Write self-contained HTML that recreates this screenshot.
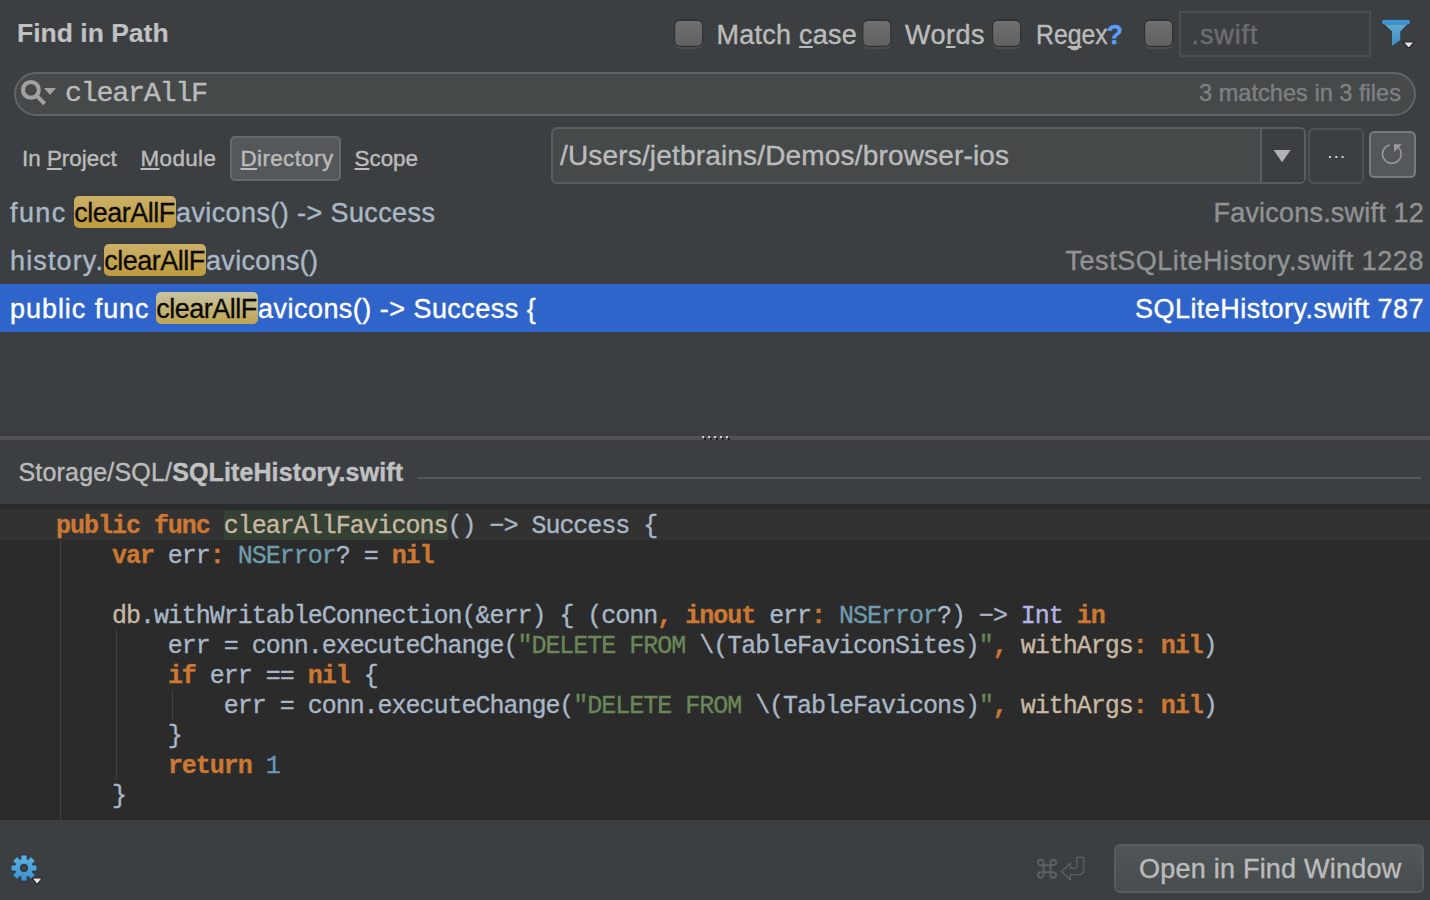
<!DOCTYPE html>
<html>
<head>
<meta charset="utf-8">
<title>Find in Path</title>
<style>
*{box-sizing:border-box;margin:0;padding:0}
html,body{width:1430px;height:900px;overflow:hidden;background:#3c3f41}
body{position:relative;font-family:"Liberation Sans",sans-serif;color:#bbbbbb}
.abs{position:absolute}
.t{position:absolute;white-space:pre;line-height:1;-webkit-text-stroke:0.4px}
u{text-decoration:underline;text-decoration-thickness:2px;text-underline-offset:2px;text-decoration-skip-ink:none}
.cb{position:absolute;width:29.5px;height:28px;border-radius:6px;background:linear-gradient(#6f6f6f,#626262);border:2px solid #2d2f31;box-shadow:0 2px 0 #4a4d4f}
.mono{font-family:"Liberation Mono",monospace}
svg{position:absolute;overflow:visible}
/* results */
.rt{position:absolute;white-space:pre;line-height:1;font-size:27px;color:#a9b7c6;-webkit-text-stroke:0.4px}
.rf{position:absolute;white-space:pre;line-height:1;font-size:27px;color:#909294;right:6px;text-align:right;-webkit-text-stroke:0.4px}
.hl{position:absolute;width:102px;height:32px;border-radius:5px;background:linear-gradient(#ccb068,#bf9b3e)}
.hlt{position:absolute;white-space:pre;line-height:1;font-size:27px;color:#0a0a0a;letter-spacing:-0.5px;-webkit-text-stroke:0.3px}
/* code */
#code{position:absolute;left:0;top:504px;width:1430px;height:316px;background:#2b2b2b;overflow:hidden}
.cl{position:absolute;left:56px;height:30px;line-height:30px;font-family:"Liberation Mono",monospace;font-size:25px;letter-spacing:-1.02px;color:#a9b7c6;white-space:pre;-webkit-text-stroke:0.35px}
.k{color:#cc7832;font-weight:bold}
.p{color:#cc7832}
.ty{color:#6f9cad}
.s{color:#6a8759}
.n{color:#6897bb}
.it{color:#b5b6e3}
.fn{color:#c8b8a2}
.g{position:absolute;width:1px;background:#424242}
</style>
</head>
<body>

<!-- title -->
<div class="t" style="left:17px;top:20px;font-size:26.5px;font-weight:bold;color:#c0c1c2;-webkit-text-stroke:0.15px">Find in Path</div>

<!-- checkboxes -->
<svg style="left:0;top:0" width="1430" height="60" viewBox="0 0 1430 60">
<defs><linearGradient id="cg" x1="0" y1="0" x2="0" y2="1"><stop offset="0" stop-color="#707070"/><stop offset="1" stop-color="#616161"/></linearGradient>
<g id="cb"><rect x="0.2" y="2.6" width="28.9" height="27.2" rx="6" fill="#4a4d4f"/><rect x="0" y="0" width="29.3" height="27.8" rx="6" fill="#313335"/><rect x="1.35" y="1.7" width="26.7" height="24.7" rx="4.6" fill="url(#cg)"/></g></defs>
<use href="#cb" x="673.9" y="19.3"/><use href="#cb" x="862.1" y="19.3"/><use href="#cb" x="991.9" y="19.3"/><use href="#cb" x="1143.9" y="19.3"/>
</svg>
<div class="t" style="left:716.5px;top:22px;font-size:27px;letter-spacing:0.25px">Match <u>c</u>ase</div>
<div class="t" style="left:905px;top:22px;font-size:27px;letter-spacing:0.5px">Wo<u>r</u>ds</div>
<div class="t" style="left:1035.5px;top:22px;font-size:27px;transform:scaleX(0.918);transform-origin:0 0">Re<u>g</u>ex</div>
<div class="t" style="left:1106.5px;top:22px;font-size:27px;font-weight:bold;color:#589df6">?</div>

<!-- file mask -->
<div class="abs" style="left:1179px;top:11px;width:192px;height:46px;border:2px solid #4b4e50;background:#3c3f41"></div>
<div class="t" style="left:1191.5px;top:22px;font-size:27px;color:#6b6e70;letter-spacing:0.9px">.swift</div>

<!-- filter icon -->
<svg style="left:1376px;top:14px" width="44" height="40" viewBox="1376 14 44 40">
<defs><linearGradient id="fg" gradientUnits="userSpaceOnUse" x1="0" y1="24" x2="0" y2="46"><stop offset="0" stop-color="#62acd2"/><stop offset="1" stop-color="#3a8cc6"/></linearGradient></defs>
<g stroke="#2f3133" stroke-width="1.1" fill="#2f3133" stroke-linejoin="round"><path d="M1383.6 23.5 L1408.3 23.5 L1400.3 31.6 L1400.3 40.3 L1391.9 46.2 L1391.9 31.6 Z"/><rect x="1381.9" y="19.7" width="28.2" height="4.6" rx="2.3"/></g>
<path d="M1383.6 23.5 L1408.3 23.5 L1400.3 31.6 L1400.3 40.3 L1391.9 46.2 L1391.9 31.6 Z" fill="url(#fg)"/>
<rect x="1381.9" y="19.7" width="28.2" height="4.6" rx="2.3" fill="#4194d0"/>
<path d="M1384.5 24.45 H1407.5" stroke="#2f7fb9" stroke-width="0.6"/>
<path d="M1403 42 L1414.4 42 L1408.7 48.4 Z" fill="#e4e4e4" stroke="#242628" stroke-width="1.2" stroke-linejoin="round"/>
</svg>

<!-- search field -->
<div class="abs" style="left:14px;top:72px;width:1402px;height:44px;border-radius:22px;border:2px solid #626567;background:#45494a"></div>
<svg style="left:16px;top:74px" width="50" height="40" viewBox="16 74 50 40">
<circle cx="30.9" cy="89.9" r="7.95" fill="none" stroke="#a1a2a3" stroke-width="4"/>
<path d="M36.3 95.4 L44.7 103.7" stroke="#a1a2a3" stroke-width="4.1" fill="none"/>
<path d="M44 88 L56.1 88 L50.05 95 Z" fill="#a1a2a3"/>
</svg>
<div class="t mono" style="left:65px;top:80px;font-size:28.5px;letter-spacing:-1.35px;color:#bbbbbb;-webkit-text-stroke:0.35px">clearAllF</div>
<div class="t" style="left:1199px;top:82px;font-size:23.6px;color:#7d8082">3 matches in 3 files</div>

<!-- scope tabs -->
<div class="t" style="left:22px;top:148px;font-size:22.4px">In <u>P</u>roject</div>
<div class="t" style="left:140.5px;top:148px;font-size:22.4px;letter-spacing:0.39px"><u>M</u>odule</div>
<div class="abs" style="left:230px;top:135.5px;width:111px;height:45.5px;border-radius:5px;border:2px solid #676a6c;background:#54585a"></div>
<div class="t" style="left:240.5px;top:148px;font-size:22.4px;letter-spacing:0.38px"><u>D</u>irectory</div>
<div class="t" style="left:354.5px;top:148px;font-size:22.4px"><u>S</u>cope</div>

<!-- directory combo -->
<div class="abs" style="left:551px;top:127px;width:754.5px;height:56.5px;border-radius:6px;border:2px solid #5a5d5f;background:#45494a;overflow:hidden"><div class="abs" style="left:706.5px;top:0;width:48px;height:57px;background:#3c3f41;border-left:2px solid #5a5d5f"></div></div>
<div class="t" style="left:560px;top:142px;font-size:28px;letter-spacing:0.17px;color:#bbbbbb">/Users/jetbrains/Demos/browser-ios</div>
<svg style="left:1270px;top:146px" width="24" height="20" viewBox="1270 146 24 20"><path d="M1273.6 150 L1290.6 150 L1282.1 162.2 Z" fill="#b1b2b3"/></svg>
<div class="abs" style="left:1308px;top:128px;width:55.5px;height:55.5px;border-radius:6px;border:2px solid #505355;background:#3c3f41"></div>
<div class="abs" style="left:1329.3px;top:155.8px;width:2.2px;height:2.4px;background:#d2d2d2;box-shadow:6.3px 0 0 #d2d2d2,12.6px 0 0 #d2d2d2"></div>
<div class="abs" style="left:1369px;top:131px;width:46.5px;height:46.5px;border-radius:5.5px;border:2px solid #777b7d;background:#54585a"></div>
<svg style="left:1378px;top:140px" width="28" height="28" viewBox="1378 140 28 28">
<path d="M1389.6 144.9 A9.3 9.3 0 1 0 1398.3 147.3" fill="none" stroke="#9a9b9c" stroke-width="1.5"/>
<path d="M1394 144.3 L1402 144.3 L1394.1 152 Z" fill="#9a9b9c"/>
</svg>

<!-- results -->
<div class="rt" style="left:10px;top:200px;letter-spacing:1.4px">func </div>
<div class="hl" style="left:74px;top:196px"></div><div class="hlt" style="left:74.3px;top:200px">clearAllF</div>
<div class="rt" style="left:176px;top:200px;letter-spacing:0.4px">avicons() -&gt; Success</div>
<div class="rf" style="top:200px;letter-spacing:0.2px">Favicons.swift 12</div>

<div class="rt" style="left:10px;top:248px;letter-spacing:1.14px">history.</div>
<div class="hl" style="left:104px;top:244px"></div><div class="hlt" style="left:104.3px;top:248px">clearAllF</div>
<div class="rt" style="left:206px;top:248px;letter-spacing:0.31px">avicons()</div>
<div class="rf" style="top:248px;letter-spacing:0.55px">TestSQLiteHistory.swift 1228</div>

<div class="abs" style="left:0;top:284px;width:1430px;height:48px;background:#2f65ca"></div>
<div class="rt" style="left:10px;top:296px;letter-spacing:0.95px;color:#fff">public func </div>
<div class="hl" style="left:156px;top:292px;background:linear-gradient(#c8c4a2,#c0a54f)"></div><div class="hlt" style="left:156.3px;top:296px">clearAllF</div>
<div class="rt" style="left:258px;top:296px;letter-spacing:0.47px;color:#fff">avicons() -&gt; Success {</div>
<div class="rf" style="top:296px;letter-spacing:0.45px;color:#fff">SQLiteHistory.swift 787</div>

<!-- splitter -->
<div class="abs" style="left:0;top:436px;width:1430px;height:4px;background:#505254"></div>
<div class="abs" style="left:702px;top:436px;width:2px;height:2px;background:#cfcfcf;box-shadow:6px 0 0 #cfcfcf,12px 0 0 #cfcfcf,18px 0 0 #cfcfcf,24px 0 0 #cfcfcf"></div>
<div class="abs" style="left:704px;top:438px;width:2px;height:2px;background:#1e1e1e;box-shadow:6px 0 0 #1e1e1e,12px 0 0 #1e1e1e,18px 0 0 #1e1e1e,24px 0 0 #1e1e1e"></div>

<!-- preview path -->
<div class="t" style="left:18.5px;top:460px;font-size:25px;letter-spacing:0.18px;color:#bbbbbb">Storage/SQL/<b style="color:#c0c1c2;letter-spacing:0.12px">SQLiteHistory.swift</b></div>
<div class="abs" style="left:417px;top:477px;width:1004px;height:1.5px;background:#55585a"></div>

<!-- code -->
<div id="code">
<div class="abs" style="left:0;top:6px;width:1430px;height:30px;background:#323232"></div>
<div class="abs" style="left:224px;top:6px;width:224px;height:30px;background:#344134"></div>
<div class="g" style="left:60px;top:36px;height:280px"></div>
<div class="g" style="left:116px;top:126px;height:150px"></div>
<div class="g" style="left:172px;top:186px;height:30px"></div>
<div class="cl" style="top:8px"><span class="k">public func</span> <span class="fn">clearAllFavicons</span>() −&gt; Success {</div>
<div class="cl" style="top:38px">    <span class="k">var</span> err<span class="k">:</span> <span class="ty">NSError</span>? = <span class="k">nil</span></div>
<div class="cl" style="top:98px">    <span class="fn">db</span>.withWritableConnection(&amp;err) { (conn<span class="k">,</span> <span class="k">inout</span> err<span class="k">:</span> <span class="ty">NSError</span>?) −&gt; <span class="it">Int</span> <span class="k">in</span></div>
<div class="cl" style="top:128px">        err = conn.executeChange(<span class="s">"DELETE FROM </span>\(TableFaviconSites)<span class="s">"</span><span class="k">,</span> <span class="fn">withArgs</span><span class="k">:</span> <span class="k">nil</span>)</div>
<div class="cl" style="top:158px">        <span class="k">if</span> err == <span class="k">nil</span> {</div>
<div class="cl" style="top:188px">            err = conn.executeChange(<span class="s">"DELETE FROM </span>\(TableFavicons)<span class="s">"</span><span class="k">,</span> <span class="fn">withArgs</span><span class="k">:</span> <span class="k">nil</span>)</div>
<div class="cl" style="top:218px">        }</div>
<div class="cl" style="top:248px">        <span class="k">return</span> <span class="n">1</span></div>
<div class="cl" style="top:278px">    }</div>
</div>

<!-- bottom bar -->
<svg style="left:6px;top:850px" width="44" height="40" viewBox="6 850 44 40">
<defs><linearGradient id="gg" gradientUnits="userSpaceOnUse" x1="0" y1="-13" x2="0" y2="13"><stop offset="0" stop-color="#5db2e0"/><stop offset="1" stop-color="#3a90cf"/></linearGradient></defs>
<g transform="translate(24 868)" fill="url(#gg)" stroke="#2a2c2e" stroke-width="0.8">
<path fill-rule="evenodd" d="M-3.10 -8.66L-3.10 -13.00L3.10 -13.00L3.10 -8.66A9.2 9.2 0 0 1 3.93 -8.32L7.00 -11.38L11.38 -7.00L8.32 -3.93A9.2 9.2 0 0 1 8.66 -3.10L13.00 -3.10L13.00 3.10L8.66 3.10A9.2 9.2 0 0 1 8.32 3.93L11.38 7.00L7.00 11.38L3.93 8.32A9.2 9.2 0 0 1 3.10 8.66L3.10 13.00L-3.10 13.00L-3.10 8.66A9.2 9.2 0 0 1 -3.93 8.32L-7.00 11.38L-11.38 7.00L-8.32 3.93A9.2 9.2 0 0 1 -8.66 3.10L-13.00 3.10L-13.00 -3.10L-8.66 -3.10A9.2 9.2 0 0 1 -8.32 -3.93L-11.38 -7.00L-7.00 -11.38L-3.93 -8.32A9.2 9.2 0 0 1 -3.10 -8.66ZM3.8 0A3.8 3.8 0 1 0 -3.8 0A3.8 3.8 0 1 0 3.8 0Z"/>
</g>
<path d="M32 878 L42.3 878 L37.15 884.6 Z" fill="#e4e4e4" stroke="#242628" stroke-width="1.2" stroke-linejoin="round"/>
</svg>

<svg style="left:1034px;top:854px" width="54" height="30" viewBox="1034 854 54 30" fill="none" stroke="#5d6062">
<g transform="translate(1037 858.7)" stroke-width="2">
<path d="M6.5 3.75 V16.25 M13.5 3.75 V16.25 M3.75 6.5 H16.25 M3.75 13.5 H16.25"/>
<path d="M6.5 3.75 A2.75 2.75 0 1 0 3.75 6.5"/>
<path d="M16.25 6.5 A2.75 2.75 0 1 0 13.5 3.75"/>
<path d="M3.75 13.5 A2.75 2.75 0 1 0 6.5 16.25"/>
<path d="M13.5 16.25 A2.75 2.75 0 1 0 16.25 13.5"/>
</g>
<path stroke-width="1.3" stroke-linejoin="miter" d="M1061.2 871.5 L1070.4 863.3 L1070.4 868.4 L1075.4 868.4 Q1076.9 868.4 1076.9 866.9 L1076.9 857.3 L1083.8 857.3 L1083.8 869.2 Q1083.8 874.7 1078 874.7 L1070.4 874.7 L1070.4 879.6 Z"/>
</svg>

<div class="abs" style="left:1114px;top:844px;width:309.5px;height:49px;border-radius:6px;border:2px solid #595c5e;background:linear-gradient(#515658,#484c4e)"></div>
<div class="t" style="left:1139px;top:856px;font-size:27px;letter-spacing:0.23px;color:#bbbbbb">Open in Find Window</div>

</body>
</html>
